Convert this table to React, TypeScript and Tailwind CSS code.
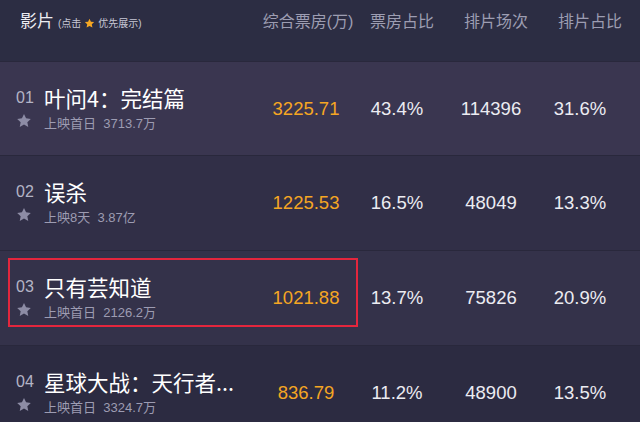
import React from "react";

const F = { fontFamily: '"Liberation Sans", "Noto Sans CJK SC", sans-serif' };

function Star({ className }: { className?: string }) {
  return (
    <svg viewBox="0 0 24 24" className={className} fill="currentColor">
      <path d="M12 1.5l3.1 6.5 7.1.9-5.2 4.9 1.4 7.1L12 17.4l-6.4 3.5 1.4-7.1-5.2-4.9 7.1-.9z" />
    </svg>
  );
}

type Row = {
  no: string;
  title: string;
  sub: string;
  box: string;
  pct: string;
  shows: string;
  spct: string;
  bg: string;
  h: string;
};

const rows: Row[] = [
  { no: "01", title: "叶问4：完结篇", sub: "上映首日  3713.7万", box: "3225.71", pct: "43.4%", shows: "114396", spct: "31.6%", bg: "bg-[#3a3650]", h: "h-[94px]" },
  { no: "02", title: "误杀", sub: "上映8天  3.87亿", box: "1225.53", pct: "16.5%", shows: "48049", spct: "13.3%", bg: "bg-[#312f47]", h: "h-[95px]" },
  { no: "03", title: "只有芸知道", sub: "上映首日  2126.2万", box: "1021.88", pct: "13.7%", shows: "75826", spct: "20.9%", bg: "bg-[#34324a]", h: "h-[95px]" },
  { no: "04", title: "星球大战：天行者...", sub: "上映首日  3324.7万", box: "836.79", pct: "11.2%", shows: "48900", spct: "13.5%", bg: "bg-[#2c2b41]", h: "h-[95px]" },
];

export default function App() {
  return (
    <div className="relative w-[640px] h-[422px] overflow-hidden bg-[#2c2d43]" style={F}>
      {/* Header */}
      <div className="flex h-[61px] items-center pb-[17px] bg-[#2c2d43]">
        <div className="w-[260px] pl-[20px] flex items-baseline">
          <span className="text-[17px] text-[#ececf2]">影片</span>
          <span className="ml-[4px] flex items-center text-[10px] text-[#c8c8d6]">
            (点击
            <Star className="mx-[3px] w-[11px] h-[11px] text-[#f5a623]" />
            优先展示)
          </span>
        </div>
        <div className="w-[96px] text-center text-[16px] text-[#9d9db2]">综合票房(万)</div>
        <div className="w-[92px] text-center text-[16px] text-[#9d9db2]">票房占比</div>
        <div className="w-[96px] text-center text-[16px] text-[#9d9db2]">排片场次</div>
        <div className="w-[92px] text-center text-[16px] text-[#9d9db2]">排片占比</div>
      </div>

      {rows.map((r) => (
        <div key={r.no} className={`flex items-center border-t border-[#29283c] ${r.bg} ${r.h}`}>
          <div className="w-[258px] self-stretch flex flex-col pt-[21px] pl-[16px]">
            <div className="flex items-center h-[30px]">
              <span className="w-[28px] text-[16px] text-[#b4b4c6]">{r.no}</span>
              <span className="text-[21.5px] text-white whitespace-nowrap" style={{ fontFamily: '"Noto Sans CJK SC", sans-serif' }}>
                {r.title}
              </span>
            </div>
            <div className="flex items-center h-[22px]">
              <span className="w-[28px] flex">
                <Star className="ml-[0px] -mt-[6px] w-[16px] h-[16px] text-[#8d8ca5]" />
              </span>
              <span className="text-[13px] text-[#9d9cb2] whitespace-pre">{r.sub}</span>
            </div>
          </div>
          <div className="w-[96px] text-center text-[18.5px] text-[#f5a623]">{r.box}</div>
          <div className="w-[86px] text-center text-[18.5px] text-[#ececf2]">{r.pct}</div>
          <div className="w-[102px] text-center text-[18.5px] text-[#ececf2]">{r.shows}</div>
          <div className="w-[76px] text-center text-[18.5px] text-[#ececf2]">{r.spct}</div>
        </div>
      ))}

      {/* Red highlight box */}
      <div className="absolute left-[8px] top-[258px] w-[350px] h-[69px] border-[2.5px] border-[#e4263d]" />
    </div>
  );
}
